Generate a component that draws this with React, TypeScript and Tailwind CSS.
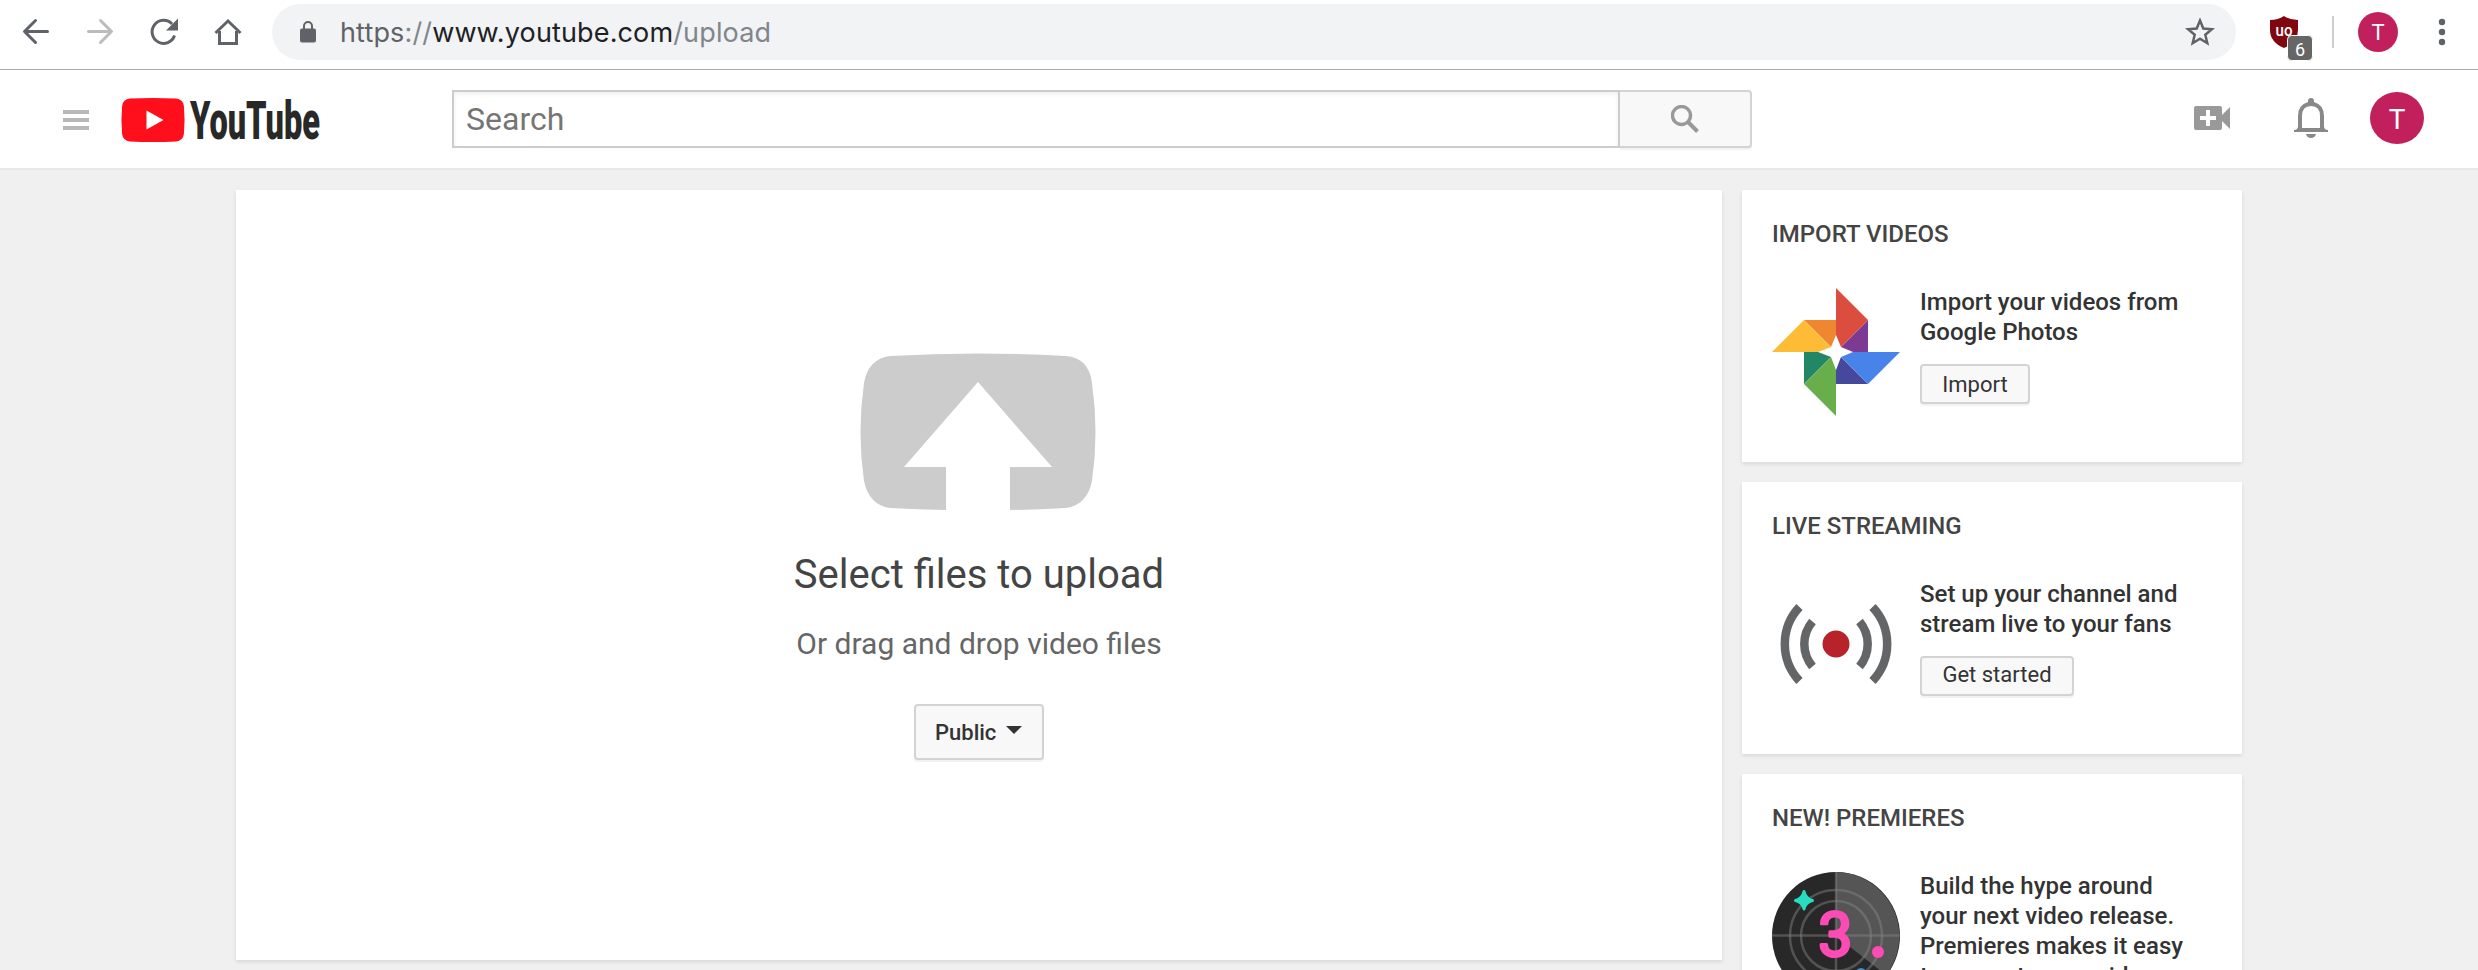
import React from "react";

const cardShadow = "shadow-[0_2px_4px_rgba(0,0,0,0.1)]";
const btn =
  "flex items-center rounded-[4px] border-2 border-[#d3d3d3] bg-[#f8f8f8] text-[#333] shadow-[0_2px_0_rgba(0,0,0,0.05)]";

function BrowserBar() {
  return (
    <div className="flex h-[70px] items-start border-b border-[#aeaeb0] bg-white">
      <svg className="h-[69px] w-[272px] shrink-0" viewBox="0 0 272 69" fill="none" stroke="#5f6368" strokeWidth="3" strokeLinecap="round" strokeLinejoin="round">
        <path d="M47.500 31.500H24.800M35.500 20.500l-11 11 11 11" />
        <path stroke="#babcbe" d="M88.500 31.500h22.700M100.500 20.500l11 11-11 11" />
        <path strokeLinecap="butt" d="M174.500 35.500a11.500 11.500 0 1 1-2.500-11.500" />
        <path fill="#5f6368" stroke="none" d="M178 18.500v12h-12z" />
        <path strokeLinecap="butt" strokeLinejoin="miter" d="M215.500 33L228 21l12.500 12M219.500 31v12.500h17V31" />
      </svg>
      <div className="mt-1 flex h-14 w-[1964px] items-center rounded-full bg-[#f1f3f4] pl-[28px] pr-[20px]">
        <svg className="h-[22px] w-4 shrink-0" viewBox="0 0 16 22">
          <rect x="0" y="7.500" width="16" height="14" rx="2" fill="#5f6368" />
          <path d="M4 9V5a4 4 0 0 1 8 0v4" fill="none" stroke="#5f6368" strokeWidth="2" />
        </svg>
        <div className="ml-6 flex-1 whitespace-pre pt-[2px] font-[Inter,sans-serif] text-[27px] leading-8 tracking-[0.14px] text-[#80868b]">
          <span className="text-[#5f6368]">https</span>://<span className="text-[#202124]">www.youtube.com</span>/upload
        </div>
        <svg className="h-8 w-8" viewBox="0 0 32 32" fill="none" stroke="#5f6368" strokeWidth="2.500">
          <path d="M16 4.500l3.300 8 8.600.7-6.600 5.600 2 8.400-7.300-4.500-7.300 4.500 2-8.400-6.600-5.600 8.600-.7z" />
        </svg>
      </div>
      <svg className="h-[69px] w-[242px] shrink-0 font-[Roboto,sans-serif]" viewBox="2236 0 242 69">
        <path fill="#800610" d="M2270 20q8 0 14-4 6 4 14 4v10q0 12-14 18-14-6-14-18z" />
        <text x="2275.500" y="35.500" fontSize="17" fontWeight="500" fill="#fff" textLength="17" lengthAdjust="spacingAndGlyphs">uo</text>
        <rect x="2287.500" y="35.500" width="25" height="25" rx="4" fill="#666" stroke="#fff" />
        <text x="2300" y="56" fontSize="18" fill="#fff" textAnchor="middle">6</text>
        <rect x="2332" y="16" width="2" height="32" fill="#cdcdcd" />
        <circle cx="2378" cy="32" r="20" fill="#c2205d" />
        <text x="2378" y="40" fontSize="22" fill="#fff" textAnchor="middle">T</text>
        <g fill="#5f6368">
          <circle cx="2442" cy="22" r="3.200" />
          <circle cx="2442" cy="32" r="3.200" />
          <circle cx="2442" cy="42" r="3.200" />
        </g>
      </svg>
    </div>
  );
}

function Masthead() {
  return (
    <header className="flex h-[100px] items-start border-b-2 border-[#e8e8e8] bg-white pt-5">
      <svg className="h-[58px] w-[452px] shrink-0 font-[Roboto,sans-serif]" viewBox="0 90 452 58">
        <path fill="#b8b8b8" d="M63 110h26v4H63zM63 118h26v4H63zM63 126h26v4H63z" />
        <path fill="#ff0e1c" d="M130 98.600q23-1.200 46 0 7 .6 7.900 7.400 1.300 14 0 28-.9 6.800-7.900 7.400-23 1.200-46 0-7-.6-7.900-7.400-1.300-14 0-28 .9-6.800 7.900-7.400z" />
        <path fill="#fff" d="M146.500 110.500v19l17-9.500z" />
        <text x="190" y="139" fontSize="53" fontWeight="900" fill="#282828" textLength="130" lengthAdjust="spacingAndGlyphs">YouTube</text>
      </svg>
      <div className="flex h-[58px] w-[1168px] items-center border-2 border-[#ccc] pl-3 text-[32px] text-[#757575] shadow-[inset_0_2px_4px_#eee]">Search</div>
      <div className={`${btn} h-[58px] w-[132px] justify-center rounded-l-none border-l-0`}>
        <svg className="h-7 w-7" viewBox="0 0 28 28" fill="none" stroke="#999" strokeWidth="3.400">
          <circle cx="10.500" cy="10.500" r="9" />
          <path d="M17.500 17.500l9 9" strokeWidth="4" />
        </svg>
      </div>
      <svg className="h-[58px] w-[726px] shrink-0" viewBox="1752 90 726 58">
        <path fill="#999" fillRule="evenodd" d="M2196 106h24q2 0 2 2v7l8-8v22l-8-8v7q0 2-2 2h-24q-2 0-2-2v-20q0-2 2-2zm10 4v6h-6v4h6v6h4v-6h6v-4h-6v-6z" />
        <path fill="#888" d="M2306 134h10q-1 4-5 4t-5-4zM2294 130q4 0 4-4v-10q0-11 10-14v-1q0-3 3-3t3 3v1q10 3 10 14v10q0 4 4 4v2h-34z" />
        <path fill="#fff" d="M2302 128v-12q0-10 9-10t9 10v12z" />
        <ellipse cx="2397" cy="118" rx="27" ry="26" fill="#c2205d" />
        <text x="2397" y="129" fontSize="28" fill="#fff" textAnchor="middle">T</text>
      </svg>
    </header>
  );
}

function UploadPanel() {
  return (
    <main className={`flex h-[770px] w-[1486px] flex-col items-center bg-white pt-[163px] ${cardShadow}`}>
      <svg className="mr-[2px] h-[158px] w-[236px]" viewBox="0 0 236 158">
        <path fill="#ccc" d="M30 3q88-5 176 0 23 2 26 27 7 49 0 98-5 24-26 27-29 1.500-56 2v-43h42L118 29 44 114h42v43q-28-.5-56-2-21-3-26-27-7-49 0-98Q8 6 30 3z" />
      </svg>
      <div className="mt-[34px] text-[40px] leading-[60px] text-[#444]">Select files to upload</div>
      <div className="mt-[19px] text-[30px] leading-[40px] text-[#666]">Or drag and drop video files</div>
      <div className={`${btn} mt-[40px] h-14 w-[130px] justify-between pl-[19px] pr-5 text-[22px] font-medium`}>
        Public
        <svg className="mb-1 h-2 w-4" viewBox="0 0 16 8"><path d="M0 0h16l-8 8z" fill="#333" /></svg>
      </div>
    </main>
  );
}

function PhotosIcon() {
  return (
    <svg className="h-32 w-32 shrink-0" viewBox="0 0 128 128">
      <path fill="#ee872f" d="M32 32h32v32z" /><path fill="#fdbb36" d="M32 32L0 64h64z" />
      <path fill="#7d3a93" d="M96 32v32H64z" /><path fill="#db4d3f" d="M64 0v64l32-32z" />
      <path fill="#46489b" d="M64 64v32h32z" /><path fill="#4883ea" d="M64 64h64L96 96z" />
      <path fill="#228766" d="M32 64v32l32-32z" /><path fill="#68af4b" d="M64 64v64L32 96z" />
      <path fill="#fff" d="M64 47l5 12 12 5-12 5-5 13-5-13-13-5 13-5z" />
    </svg>
  );
}

function LiveIcon() {
  return (
    <svg className="h-32 w-32 shrink-0" viewBox="0 0 128 128" fill="none" stroke="#646566" strokeWidth="8.500">
      <path d="M27.500 27a54 54 0 0 0 0 74M40.500 41.500a35 35 0 0 0 0 45M100.500 27a54 54 0 0 1 0 74M87.500 41.500a35 35 0 0 1 0 45" />
      <circle cx="64" cy="64" r="13.500" fill="#b7222b" stroke="none" />
    </svg>
  );
}

function PremieresIcon() {
  return (
    <svg className="h-32 w-32 shrink-0" viewBox="0 0 128 128">
      <circle cx="64" cy="64" r="64" fill="#282828" />
      <path d="M64 64V0a64 64 0 0 1 50 103z" fill="#555" />
      <g fill="none" stroke="#888" strokeOpacity=".45" strokeWidth="2.500">
        <path d="M64 0v128M0 63.500h128" />
        <circle cx="64" cy="64" r="46" />
        <circle cx="64" cy="64" r="35" />
      </g>
      <path d="M32 19.500q1.500 7 8.500 9-7 1.500-8.500 8.500-1.500-7-8.500-8.500 7-2 8.500-9z" fill="#27dcc0" stroke="#27dcc0" strokeWidth="3" strokeLinejoin="round" />
      <text x="63.500" y="84" textAnchor="middle" fontSize="61" fontWeight="400" fill="#fb4bb4" stroke="#fb4bb4" strokeWidth="3" strokeLinejoin="round">3</text>
      <circle cx="106" cy="80" r="6" fill="#fb4bb4" />
      <circle cx="89" cy="102" r="6" fill="#3b8fd6" />
    </svg>
  );
}

type CardProps = {
  title: string;
  icon: React.ReactNode;
  lines: string[];
  action?: string;
  actionClass?: string;
};

function SideCard({ title, icon, lines, action, actionClass = "" }: CardProps) {
  return (
    <section className={`h-[272px] w-[500px] shrink-0 bg-white px-[30px] pt-[29px] ${cardShadow}`}>
      <h2 className="text-[24px] font-medium leading-[30px] text-[#444]">{title}</h2>
      <div className="mt-[39px] flex gap-5">
        {icon}
        <div className="-mt-px flex flex-col items-start whitespace-nowrap text-[24px] font-medium leading-[30px] text-[#333]">
          {lines.map((l) => <span key={l}>{l}</span>)}
          {action && (
            <div className={`${btn} mt-[17px] h-10 justify-center text-[22px] font-normal ${actionClass}`}>{action}</div>
          )}
        </div>
      </div>
    </section>
  );
}

export default function App() {
  return (
    <div className="h-[970px] w-[2478px] overflow-hidden bg-[#f0f0f0] font-[Roboto,sans-serif]">
      <BrowserBar />
      <Masthead />
      <div className="flex items-start gap-5 pl-[236px] pt-5">
        <UploadPanel />
        <aside className="flex flex-col gap-5">
          <SideCard title="IMPORT VIDEOS" icon={<PhotosIcon />} lines={["Import your videos from", "Google Photos"]} action="Import" actionClass="w-[110px] pt-[2px]" />
          <SideCard title="LIVE STREAMING" icon={<LiveIcon />} lines={["Set up your channel and", "stream live to your fans"]} action="Get started" actionClass="w-[154px] pb-[2px]" />
          <SideCard title="NEW! PREMIERES" icon={<PremieresIcon />} lines={["Build the hype around", "your next video release.", "Premieres makes it easy", "to promote your videos"]} />
        </aside>
      </div>
    </div>
  );
}
